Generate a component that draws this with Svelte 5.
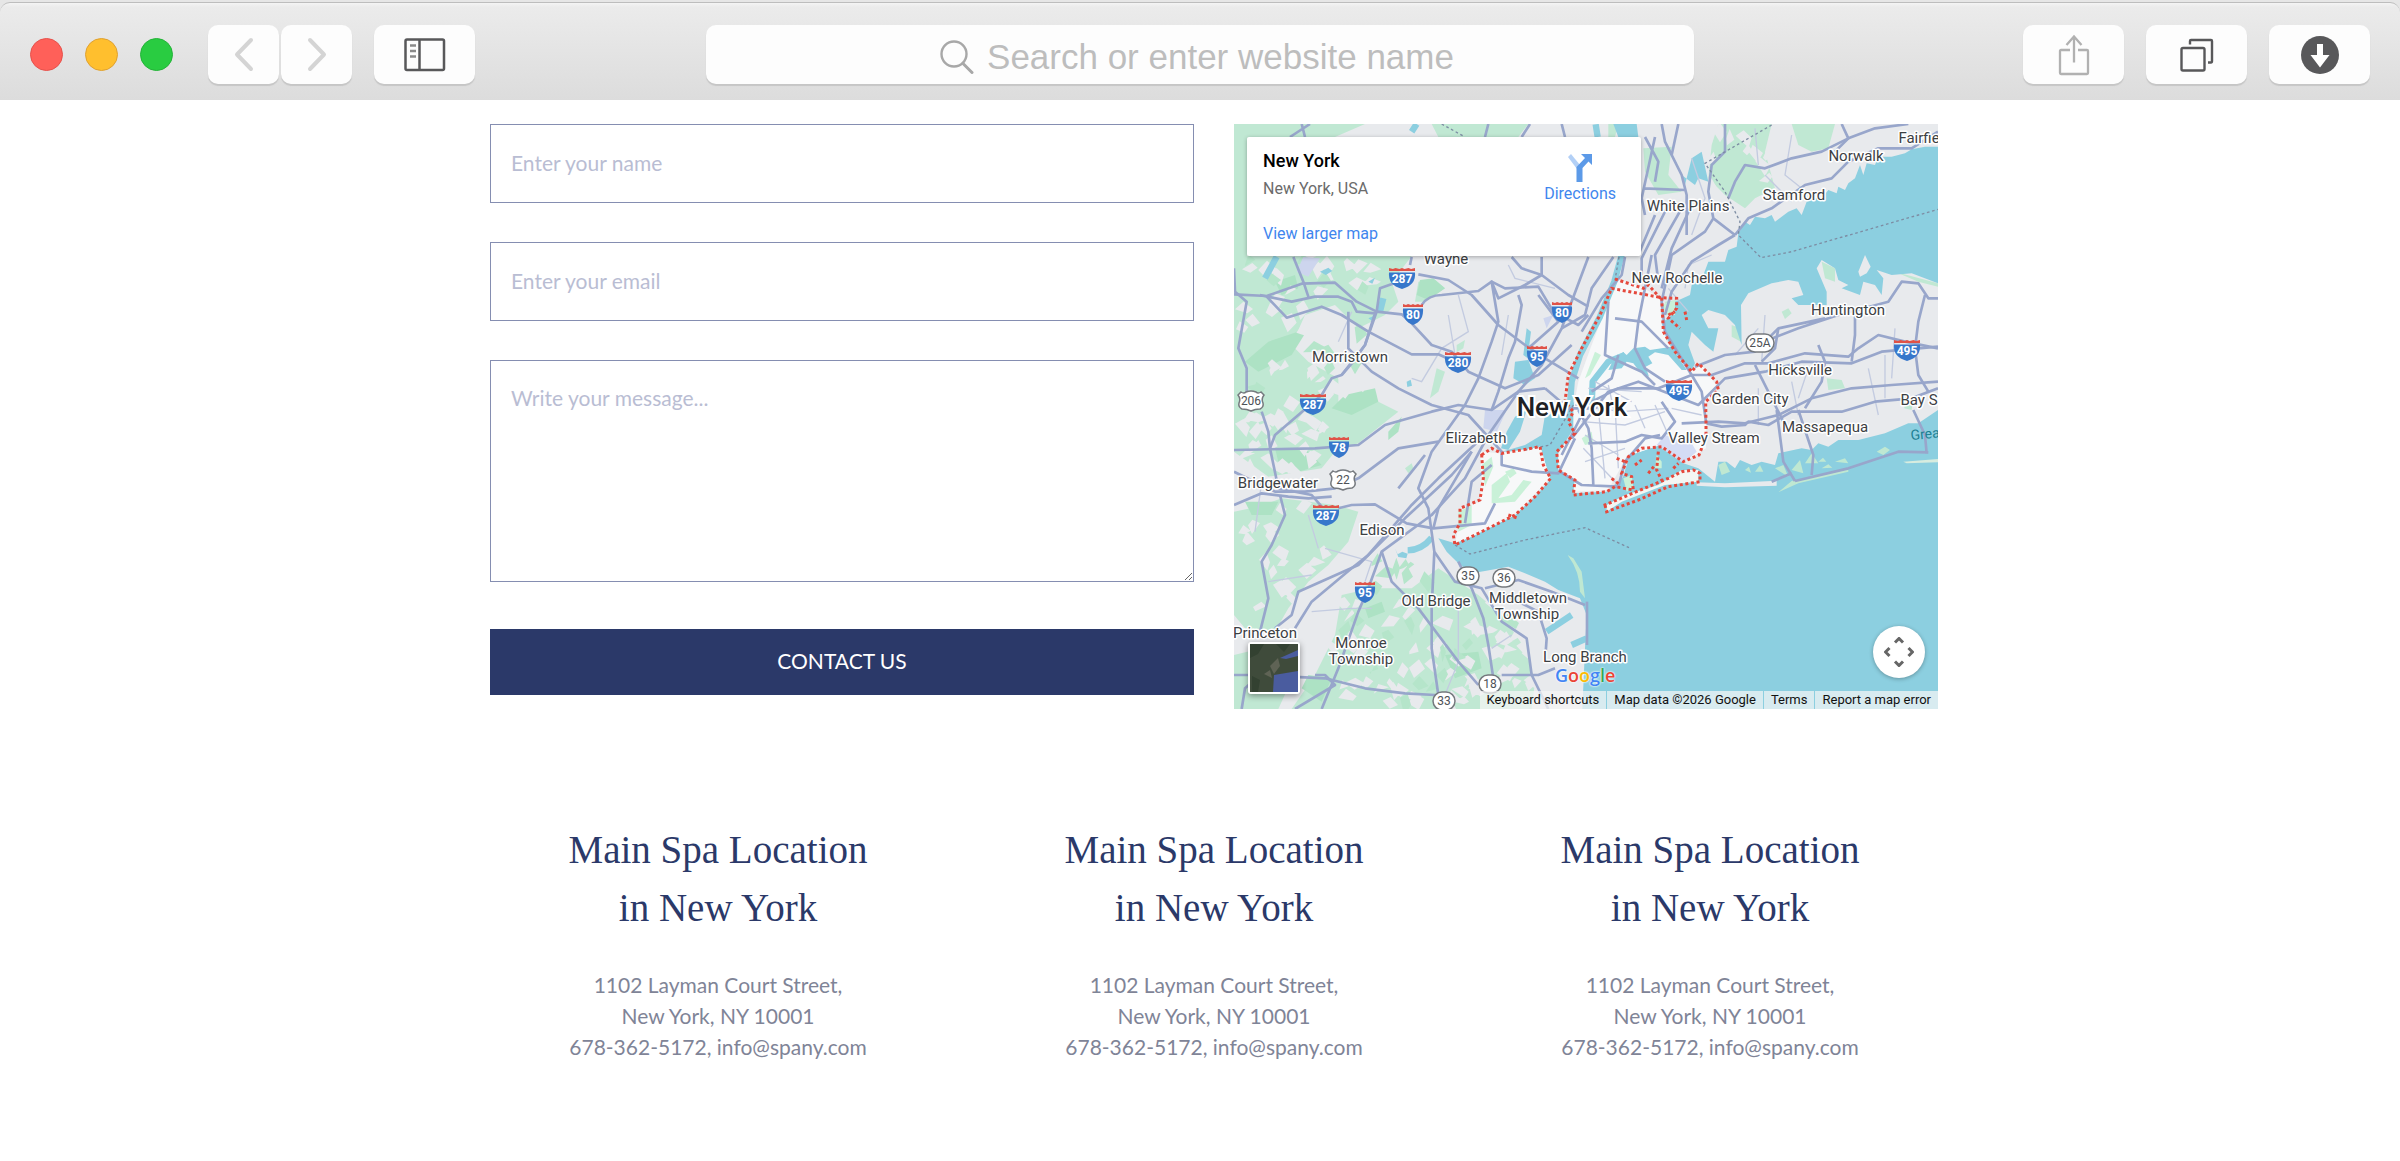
<script lang="ts">
  const locations = [1, 2, 3];

  const towns = [
    { x: 212, y: 140, text: 'Wayne' },
    { x: 116, y: 238, text: 'Morristown' },
    { x: 622, y: 37, text: 'Norwalk' },
    { x: 685, y: 19, text: 'Fairfie' },
    { x: 560, y: 76, text: 'Stamford' },
    { x: 454, y: 87, text: 'White Plains' },
    { x: 443, y: 159, text: 'New Rochelle' },
    { x: 614, y: 191, text: 'Huntington' },
    { x: 566, y: 251, text: 'Hicksville' },
    { x: 516, y: 280, text: 'Garden City' },
    { x: 685, y: 281, text: 'Bay S' },
    { x: 242, y: 319, text: 'Elizabeth' },
    { x: 44, y: 364, text: 'Bridgewater' },
    { x: 148, y: 411, text: 'Edison' },
    { x: 202, y: 482, text: 'Old Bridge' },
    { x: 294, y: 479, text: 'Middletown' },
    { x: 293, y: 495, text: 'Township' },
    { x: 31, y: 514, text: 'Princeton' },
    { x: 127, y: 524, text: 'Monroe' },
    { x: 127, y: 540, text: 'Township' },
    { x: 351, y: 538, text: 'Long Branch' },
    { x: 591, y: 308, text: 'Massapequa' },
    { x: 480, y: 319, text: 'Valley Stream' },
  ];

  const interstates = [
    { x: 168, y: 154, n: '287' },
    { x: 179, y: 190, n: '80' },
    { x: 328, y: 188, n: '80' },
    { x: 224, y: 238, n: '280' },
    { x: 303, y: 232, n: '95' },
    { x: 79, y: 280, n: '287' },
    { x: 445, y: 266, n: '495' },
    { x: 673, y: 226, n: '495' },
    { x: 105, y: 323, n: '78' },
    { x: 92, y: 391, n: '287' },
    { x: 131, y: 468, n: '95' },
  ];

  const usRoutes = [
    { x: 17, y: 277, n: '206' },
    { x: 109, y: 356, n: '22' },
  ];

  const stateRoutes = [
    { x: 526, y: 219, n: '25A' },
    { x: 234, y: 452, n: '35' },
    { x: 270, y: 454, n: '36' },
    { x: 256, y: 560, n: '18' },
    { x: 210, y: 577, n: '33' },
  ];

  // terrain is drawn on a 3x grid
  const greens = [
    '27,27 420,27 330,66 66,70 66,424 560,424 500,500 520,560 480,600 400,640 330,570 240,600 200,690 250,740 340,790 340,860 460,860 520,890 400,985 330,1010 290,1060 130,1085 27,1010',
    '580,500 630,495 660,520 600,560 570,560',
    '27,1190 100,1175 170,1150 330,1170 400,1190 370,1280 310,1350 250,1400 190,1480 150,1550 60,1540 27,1500',
    '350,1440 440,1420 560,1420 640,1360 760,1440 830,1500 900,1600 930,1700 920,1782 200,1782 270,1680 330,1560',
    '27,1620 110,1600 220,1650 160,1782 27,1782',
    '620,27 910,27 880,66 640,66',
    '1480,27 1640,27 1620,110 1650,220 1590,250 1560,280 1500,240 1450,190 1460,90',
    '1700,27 1830,27 1810,100 1760,110 1720,90',
    '1255,100 1340,95 1330,180 1370,230 1300,240 1260,170',
    '1150,27 1180,27 1170,66 1150,66',
    '615,850 635,760 660,770 640,830',
    '1670,590 1690,580 1700,595 1680,612',
    '1520,630 1545,640 1548,680 1520,665',
    '1790,440 1830,460 1830,500 1800,490',
    '1805,790 1850,795 1860,820 1810,825',
    '1320,560 1355,555 1350,600 1325,590',
    '2010,470 2139,505 2139,515 2080,500',
    '695,690 720,675 715,700 695,712',
    '540,1060 560,1045 565,1060 550,1075',
    '2040,845 2065,850 2060,885 2038,880',
  ];

  const darkGreens = [
    '130,680 250,640 200,720 100,770 60,740',
    '360,840 450,820 460,860 380,900 320,880',
    '585,495 625,490 660,520 610,555 575,540',
    '150,1000 240,1000 290,1050 220,1070 160,1040',
    '420,1480 470,1460 480,1490 430,1510',
    '660,1620 760,1610 770,1660 690,1690',
    '250,1680 320,1690 290,1760 230,1720',
    '150,500 210,480 220,520 170,540',
    '490,950 530,905 520,950 490,975',
    '60,1160 160,1160 140,1200 80,1200',
  ];

  const highways = [
    'M27 538L125 543L230 506L330 503L395 560L455 590L530 598L560 625L620 690L680 710L730 770L840 820L940 780L1040 690',
    'M125 545L185 608L290 575L350 600L430 650L560 718L640 718L700 745',
    'M590 570Q610 540 650 540L760 528L800 500L840 520L940 515L985 590L1060 630L1090 600',
    'M580 478L670 495L740 540L820 630L900 690L960 730L1060 790',
    'M27 1005L270 1000L400 990L480 930L620 890L700 870L800 885L880 830L960 820',
    'M560 426L555 450M520 500L465 520L455 590L420 690L350 780L320 790L290 840L150 960L135 1000L160 1120L260 1140L290 1175',
    'M340 1180L380 1170L450 1168L545 1225L625 1240L780 1225L810 1165',
    'M1090 426L1010 640L950 750L880 830L790 960L720 1090L620 1200L470 1310L430 1420L400 1490L340 1660L290 1782',
    'M950 426L950 480L900 510L820 550L800 500L820 620L800 680L760 790L720 870L620 1010L580 1120L610 1180L628 1310L690 1400L770 1420L830 1520L905 1570L920 1680L970 1782',
    'M860 426L890 460L950 480L1030 540L1090 575',
    'M205 426L235 500L250 545M105 540L200 560L270 545L340 545L380 560L395 590L450 595L420 690L385 740L350 780',
    'M370 590L370 700L440 770L520 820L620 870L730 900L830 1010L830 1050L920 1070L1000 1075L1050 970',
    'M27 460L30 530L65 560L40 700L65 760L65 840M110 890L130 950L135 1000',
    'M27 1070L150 1130L240 1130L330 1120L400 1090L520 1000L640 980',
    'M27 1170L110 1135L190 1145L250 1150L320 1145',
    'M165 1140L180 1200L140 1290L110 1340L130 1450L100 1570',
    'M600 1020L520 1120M740 1010L680 1080L540 1210L400 1350L220 1430L200 1500L150 1540',
    'M780 960L640 1090L560 1170L430 1320L380 1360L260 1460L210 1540',
    'M470 1310L500 1400L580 1480L640 1560L700 1640L760 1710',
    'M628 1310L620 1480L620 1600L640 1740L640 1782',
    'M27 1680L100 1680L300 1690L420 1720L540 1735L630 1740M830 1680L940 1680L990 1660',
    'M50 1782L60 1720L140 1650M210 1782L330 1710L300 1680L270 1680',
    'M700 1340L740 1420L775 1510L790 1590L805 1690',
    'M780 1420L880 1395L980 1430L1080 1470M840 1440L940 1490L965 1570L960 1640',
    'M625 1240L640 1180L740 1010M720 1225L740 1100L800 1050',
    'M1200 426L1190 480L1130 550L1070 650M1165 426L1100 520L1080 600L1010 640',
    'M1010 27L1020 66M790 27L780 66M915 27L890 66M230 27L240 66M255 27L195 66',
    'M1310 27L1320 80L1370 180L1385 240L1385 360M1500 27L1500 110L1460 150L1450 230L1465 310L1530 360',
    'M1255 220L1380 225M1290 66L1250 250L1260 300M1260 66L1300 140L1290 200M1360 27L1340 120',
    'M1280 420L1260 520L1240 620L1230 700L1260 760L1320 800',
    'M1330 270L1250 430L1250 490M1370 280L1290 420L1300 500M1400 270L1340 400L1310 520M1290 300L1240 420',
    'M1465 310L1440 350L1340 420L1310 560L1320 650L1400 780L1430 830L1443 920',
    'M1530 360L1480 390L1400 440L1340 530L1320 600',
    'M1530 360L1570 310L1640 280L1740 210L1820 190L1870 140L1960 100L2060 100L2139 50',
    'M1510 250L1530 200L1560 150L1620 160L1700 130L1790 110L1870 70L1950 40L2050 27',
    'M1830 110L1870 70L1850 27',
    'M1170 610L1250 620L1330 700M1150 560L1140 720L1250 770L1290 810M1180 720L1160 790L1100 830',
    'M1100 860L1180 820L1300 820L1400 780L1460 780L1560 745L1630 745L1740 715L1870 725L1900 700L1960 660L2040 680L2139 700',
    'M1040 970L1150 830L1240 800L1420 870L1500 790L1620 770L1730 740L1880 745L1970 710L2139 695',
    'M1410 755L1500 720L1590 710L1660 640L1800 610M1590 690L1720 640L1840 600L1990 560L2030 500L2080 505L2110 550L2139 550',
    'M1590 750L1610 790L1650 870L1690 950',
    'M1370 925L1480 920L1560 925L1660 900L1760 850L1880 820L2000 810L2139 800',
    'M1445 925L1490 935L1560 930L1570 920L1630 930L1700 890L1850 890L1950 860L2060 850L2139 820',
    'M1655 885L1675 1040L1710 1098M1720 885L1765 1020L1760 1080M2065 885L2100 960L2105 1015',
    'M1640 1100L1700 1075M1710 1098L1870 1060L2020 1010L2110 1012',
    'M1660 640L1650 700L1610 740M1780 690L1800 740L1790 800L1740 880M1890 600L1890 660L1880 740M2100 540L2080 620L2070 700L2080 780L2110 830',
    'M1060 885L1090 940L1100 1000L1105 1110M1090 985L1200 980L1250 960L1310 970L1350 920L1310 860M1005 1070L1070 1110L1180 1115L1200 1040L1260 970L1305 960',
    'M1010 1020L1040 960L1070 900M960 820L1030 880L1100 880',
    'M880 540L890 570L870 680L850 730L820 830L800 885M940 540L1000 620L910 700',
    'M1086 1460L1086 1590',
  ];

  const streets = [
    'M670 600L690 720M700 540L730 650L650 700L590 800L560 790',
    'M850 450L870 490L990 520M380 590L340 680M850 600L830 720',
    'M1050 870L1190 890L1330 880M1070 920L1200 930L1320 890M1080 1040L1200 1000M1120 880L1140 1090M1170 870L1180 1060M1230 870L1260 940',
    'M1090 820L1250 830M1110 800L1220 860M1150 810L1170 900M1080 960L1180 1020M1075 1000L1180 1110M1290 870L1330 960',
    'M1340 880L1430 900M1600 820L1600 930M1700 800L1720 900M1620 600L1610 740M1980 720L1980 850M1930 760L1960 900',
    'M300 1300L440 1340L420 1400M130 1400L260 1380M700 1480L700 1640L660 1740',
    'M1700 60L1680 180L1730 220M1620 180L1700 260M1590 40L1600 150M1400 130L1440 250L1400 360',
    'M110 1100L90 1250M250 1200L280 1300M860 1560L800 1600M440 1480L380 1480L260 1490',
    'M1330 520L1390 590M1460 420L1390 450L1380 520M1600 640L1530 720M1750 760L1720 850M2010 640L2000 790',
  ];

  const rivers = [
    'M1112 28L1118 66M1190 420L1168 500L1125 605L1065 720L1040 800L1035 870',
    'M620 1268Q590 1305 548 1306',
    'M1100 870L1103 800L1150 740L1200 720',
    'M120 490L155 425M465 590L475 550',
    'M560 50L575 27M965 1550L1040 1500M1040 1590L1085 1570',
  ];

  // small parcels that break up the woodland and farmland west of the city
  function scatter(count: number, seed: number, box: number[]) {
    let s = seed;
    const rnd = () => {
      s = (s * 16807) % 2147483647;
      return s / 2147483647;
    };
    let d = '';
    for (let i = 0; i < count; i++) {
      const x = Math.round(box[0] + rnd() * box[2]);
      const y = Math.round(box[1] + rnd() * box[3]);
      const r = () => Math.round(8 + rnd() * 26);
      d += `M${x} ${y}l${r()} ${-r()}l${r()} ${r()}l${-r()} ${r()}z`;
    }
    return d;
  }

  const clearings =
    scatter(46, 71, [30, 430, 400, 450]) +
    scatter(30, 37, [30, 890, 300, 170]) +
    scatter(22, 93, [40, 1180, 250, 320]) +
    scatter(70, 11, [300, 1440, 600, 330]) +
    scatter(10, 53, [1450, 40, 180, 170]);
  const woods = scatter(8, 29, [420, 1340, 180, 90]) + scatter(12, 61, [60, 440, 350, 420]) + scatter(14, 17, [340, 1480, 480, 280]);
</script>

<header class="toolbar">
  <div class="group">
    <div class="lights">
      <button class="light red" aria-label="Close"></button>
      <button class="light amber" aria-label="Minimize"></button>
      <button class="light green" aria-label="Zoom"></button>
    </div>
    <div class="nav">
      <button class="tool narrow" aria-label="Back">
        <svg width="22" height="36" viewBox="0 0 22 36"><path d="M18 3L4 17.500L18 32" class="arrow" /></svg>
      </button>
      <button class="tool narrow" aria-label="Forward">
        <svg width="22" height="36" viewBox="0 0 22 36"><path d="M4 3L18 17.500L4 32" class="arrow" /></svg>
      </button>
    </div>
    <button class="tool" aria-label="Show sidebar">
      <svg width="42" height="34" viewBox="0 0 42 34" fill="none" stroke="#58585a" stroke-width="2.500">
        <rect x="1.500" y="1.500" width="38.500" height="30.500" rx="1.500" />
        <path d="M15.500 1.500V32" />
        <path d="M6 7.500h6M6 13h6M6 18.500h6" stroke="#8a8a8a" stroke-width="2.300" />
      </svg>
    </button>
  </div>

  <label class="search">
    <svg width="34" height="34" viewBox="0 0 34 34" fill="none" stroke="#a8a8a8" stroke-width="2.400" stroke-linecap="round">
      <circle cx="14" cy="14" r="12.500" />
      <path d="M23 23.500L32 32.500" stroke-width="3" />
    </svg>
    <input type="text" placeholder="Search or enter website name" aria-label="Search or enter website name" />
  </label>

  <div class="group right">
    <button class="tool" aria-label="Share">
      <svg width="32" height="42" viewBox="0 0 32 42" fill="none" stroke="#b1b1b1" stroke-width="2.300">
        <path d="M12 16H3Q2 16 2 17V39Q2 40 3 40H29Q30 40 30 39V17Q30 16 29 16H20" />
        <path d="M16 28.500V3M8.500 11L16 2.500L23.500 11" />
      </svg>
    </button>
    <button class="tool" aria-label="Tabs">
      <svg width="34" height="34" viewBox="0 0 34 34" fill="none" stroke="#58585a" stroke-width="2.400">
        <rect x="1.500" y="10" width="23" height="22.500" rx="1.500" />
        <path d="M10 6.500V3Q10 2 11 2H31Q32 2 32 3V23Q32 24.500 31 24.500H28" />
      </svg>
    </button>
    <button class="tool" aria-label="Downloads">
      <svg width="38" height="38" viewBox="0 0 38 38">
        <circle cx="19" cy="19" r="19" fill="#58585a" />
        <path d="M16 8h6v11h6.500L19 31.500L9.500 19H16z" fill="#fff" />
      </svg>
    </button>
  </div>
</header>

<main>
  <section class="contact">
    <form>
      <input class="field" type="text" placeholder="Enter your name" aria-label="Name" />
      <input class="field" type="email" placeholder="Enter your email" aria-label="Email" />
      <textarea class="field" placeholder="Write your message..." aria-label="Message"></textarea>
      <button class="submit" type="submit">CONTACT US</button>
    </form>

    <div class="map">
      <svg class="tiles" viewBox="0 0 704 585" preserveAspectRatio="xMidYMid slice" role="img" aria-label="Map of New York">
        <rect width="704" height="585" fill="#e8eaed" />
        <g transform="translate(-9 -9) scale(0.33333)">
          {#each greens as points}
            <polygon {points} fill="#c0e8d3" />
          {/each}
          {#each darkGreens as points}
            <polygon {points} fill="#ade2c4" />
          {/each}
          <path d={clearings} fill="#e8eaed" />
          <path d={woods} fill="#b5e5ca" />
          <path d="M780 885L845 885L815 950L775 940zM955 610L985 600L965 640zM215 470L235 426L285 430L250 485z" fill="#cdd5ee" />

          <g fill="#8ccfe0">
            <polygon
              points="2139,95 2100,95 2060,103 2040,115 2000,125 1960,125 1950,150 1925,145 1915,180 1905,150 1890,190 1870,205 1860,225 1840,215 1835,235 1810,225 1790,250 1765,250 1745,260 1730,300 1715,280 1690,290 1650,320 1640,300 1620,310 1590,305 1575,330 1560,320 1540,355 1535,395 1510,405 1500,440 1450,440 1435,480 1400,510 1395,540 1350,560 1340,600 1310,625 1325,670 1350,720 1398,770 1410,745 1390,690 1400,650 1440,690 1465,710 1480,640 1450,640 1430,600 1450,585 1500,600 1530,630 1550,690 1548,570 1570,535 1640,505 1690,495 1720,500 1735,540 1700,550 1720,570 1805,570 1805,530 1775,460 1790,435 1830,460 1840,495 1870,510 1850,520 1905,540 1915,500 1950,510 1970,540 1975,490 1955,465 2000,480 2060,475 2139,505"
            />
            <polygon
              points="1045,860 1060,900 1040,950 1000,1015 1000,1070 1050,1095 1045,1135 1145,1130 1195,1085 1215,1020 1305,990 1375,1045 1420,1060 1470,1100 1480,1040 1505,1040 1530,1060 1545,1035 1580,1050 1610,1040 1650,1050 1660,1015 1730,1000 1760,1005 1780,985 1810,995 1840,975 1900,975 1980,955 2050,925 2080,925 2139,885 2139,1782 1072,1782 1080,1600 1085,1500 1065,1450 1000,1425 960,1400 900,1375 850,1355 780,1368 740,1375 700,1345 665,1310 640,1270 690,1285 740,1265 870,1200 930,1145 975,1095 950,1005 830,1010 900,990 950,960 960,900"
            />
            <polygon points="1380,210 1400,130 1430,110 1450,200 1420,190 1410,210 1370,180" />
            <polygon points="1165,27 1235,27 1240,66 1180,66" />
            <polygon points="870,740 910,735 930,790 900,810 865,790" />
            <polygon points="828,1000 845,950 870,905 905,885 885,950 850,1005" />
            <polygon points="895,720 905,640 918,650 908,730" />
            <path d="M285 470l25-12l12 10l-20 12zM430 500l20-12l-8 18zM430 610l18-8l-6 16zM545 800l12-6l4 18l-14 4zM510 1300l8 18l14-8l16 6l-4 14l-24-4z" />
          </g>
          <polygon points="1900,470 1920,420 1937,455 1925,475 1905,485" fill="#e8eaed" />

          <polygon
            points="1175,492 1250,515 1305,550 1308,620 1325,680 1395,770 1430,750 1480,820 1445,860 1443,1000 1375,1045 1305,990 1205,1025 1150,1125 1045,1130 1050,1095 1000,1070 1000,1015 1045,950 1045,880 1060,800 1100,690 1150,560"
            fill="#f7f8f9"
          />
          <polygon points="765,1010 830,1015 945,995 975,1090 870,1200 740,1265 690,1285 700,1240 705,1180 765,1160 770,1090" fill="#f7f8f9" />
          <path d="M800 1110l45-35l10 25l-35 50l40-10l35-45l25 5l-50 60l-70 5zM840 1070l25-10l10 15l-20 15zM770 1050l30-25l5 30l-25 60z" fill="#c9f1d8" />
          <polygon points="700,1190 740,1170 740,1230 700,1250" fill="#c9f1d8" />
          <polygon points="1080,790 1110,710 1128,720 1095,780" fill="#c9f1d8" />
          <polygon points="1310,570 1350,555 1350,600 1325,600" fill="#c9f1d8" />
          <polygon points="1070,970 1100,950 1105,985 1080,990" fill="#c9f1d8" />
          <polygon points="1145,1170 1200,1140 1300,1110 1370,1065 1420,1065 1420,1100 1320,1110 1190,1160 1145,1190" fill="#f4f6f3" />
          <polygon points="1195,1085 1215,1020 1305,995 1370,1045 1340,1075 1250,1105 1210,1125" fill="#8ccfe0" />
          <polygon points="1195,1090 1220,1080 1225,1120 1205,1130" fill="#c9f1d8" />
          <polygon points="1295,1020 1310,1040 1310,1060 1290,1060" fill="#c9f1d8" />
          <polygon points="1295,990 1320,960 1400,985 1415,1010 1375,1045" fill="#d4dcf5" />
          <polygon
            points="1150,765 1170,725 1195,712 1205,720 1225,700 1260,695 1275,705 1340,695 1385,765 1370,765 1330,720 1290,712 1270,725 1282,745 1262,755 1272,785 1240,765 1225,745 1205,740 1190,760"
            fill="#8ccfe0"
          />
          <polygon points="1415,1102 1500,1105 1655,1097 1655,1112 1500,1117 1415,1112" fill="#e8eaed" />
          <polygon points="1660,1132 1700,1098 1870,1060 1870,1070 1720,1105" fill="#bfe8d2" />
          <polygon points="2035,1040 2139,1032 2139,1042 2045,1045" fill="#d7ecdf" />
          <path
            d="M1480 1050l20-10l15 30l-25 10zM1740 1045l20-30l20 30zM1700 1065l25-30l10 40zM1650 1060l25-10l15 35zM1830 1040l30-10l10 15zM1955 1010l25-15l15 10l-20 15zM1590 1070l15-20l10 20zM1560 1065l12-10l6 18zM1790 1060l20-12l12 10zM1780 1040l14-12l10 12z"
            fill="#bfe8d2"
          />
          <path d="M1028 1320L1045 1330L1070 1370L1080 1450L1065 1430Q1065 1370 1028 1320z" fill="#bfe8d2" />

          <g fill="none" stroke="#8ccfe0" stroke-width="19" stroke-linejoin="round">
            {#each rivers as d}
              <path {d} />
            {/each}
          </g>
          <g fill="none" stroke="#c3cbe0" stroke-width="4">
            {#each streets as d}
              <path {d} />
            {/each}
          </g>
          <g fill="none" stroke="#98a6cb" stroke-width="8" stroke-linejoin="round">
            {#each highways as d}
              <path {d} />
            {/each}
          </g>

          <g fill="none" stroke="#7d8da3" stroke-width="4" stroke-dasharray="8 8">
            <path d="M650 27L720 66M1640 30L1440 145L1500 230L1545 320L1540 360L1608 428L1700 410L2139 283" />
            <path d="M1182 426L1170 495M1045 870L975 990L900 1005M690 1290L735 1317L900 1275L1080 1238L1212 1298" />
          </g>
          <g fill="none" stroke="#e5483c" stroke-width="9" stroke-dasharray="9 8">
            <path d="M1170 492L1255 520L1270 510L1305 548L1355 550L1355 580L1330 610L1365 640M1310 548L1315 650L1350 710L1400 770L1420 745L1475 800L1480 825L1442 860L1443 920L1443 960L1430 1000L1422 1020L1375 1040L1310 995L1250 1000L1210 1025L1190 1075L1220 1085L1225 1125L1170 1115L1145 1130L1045 1140L1050 1095L1000 1065L995 1010L1050 955L1030 920L1045 890L1020 860L1030 780L1070 700L1125 600L1160 520Z" />
            <path d="M770 1020L800 1000L830 1015L890 1005L945 995L955 1050L977 1090L930 1145L870 1200L800 1235L740 1265L690 1290L685 1260L705 1225L705 1180L765 1155L775 1090Z" />
            <path d="M1140 1170L1145 1190L1240 1155L1330 1115L1425 1100L1425 1075L1405 1065L1370 1070L1330 1090L1270 1115Z" />
            <path d="M1175 1030L1200 1040M1160 1090L1185 1110M1300 1010L1295 1065L1310 1095M1230 1050L1250 1035M1270 1075L1290 1050M1345 1060L1360 1045M1380 590L1385 615M1330 600L1350 590M850 1200L880 1210" />
          </g>
        </g>

        {#each stateRoutes as { x, y, n }}
          <rect x={x - (n.length > 2 ? 14 : 11)} y={y - 9} width={n.length > 2 ? 28 : 22} height="18" rx="9" class="sign" />
          <text {x} y={y + 4} class="route">{n}</text>
        {/each}
        {#each usRoutes as { x, y, n }}
          <path
            transform="translate({x} {y})"
            d="M-10 -9Q-7 -7 -5 -9Q0 -11 5 -9Q7 -7 10 -9L13 -6Q10 -2 12 2Q13 6 9 8Q4 8 0 10Q-4 8 -9 8Q-13 6 -12 2Q-10 -2 -13 -6z"
            class="sign"
          />
          <text {x} y={y + 4} class="route">{n}</text>
        {/each}
        {#each interstates as { x, y, n }}
          <g transform="translate({x} {y})">
            <g transform={n.length > 2 ? 'scale(1.3 1)' : undefined}>
              <path d="M-10 -5.500H10Q11 7 0 11Q-11 7 -10 -5.500z" fill="#3777cb" />
              <path d="M-10 -10L-7 -9L-5 -10L-2 -9L0 -10L2 -9L5 -10L7 -9L10 -10V-7H-10z" fill="#e05247" />
            </g>
            <text y="5" class="interstate">{n}</text>
          </g>
        {/each}

        {#each towns as { x, y, text }}
          <text {x} {y} class="town">{text}</text>
        {/each}
        <text x="677" y="316" class="sea" transform="rotate(-5 677 316)">Grea</text>
        <text x="338" y="292" class="city">New York</text>
      </svg>

      <div class="place">
        <div class="place-text">
          <strong>New York</strong>
          <span>New York, USA</span>
          <a href="#larger">View larger map</a>
        </div>
        <a class="directions" href="#directions">
          <svg width="24" height="28" viewBox="0 0 24 28">
            <path d="M0 3L3 0L12 11L9 15z" fill="#b3d0f6" />
            <path d="M13 0H24V11L20.500 7.500L14.500 14V28H8.500V13L17 4z" fill="#5c9ae8" />
          </svg>
          Directions
        </a>
      </div>

      <button class="satellite" aria-label="Show satellite imagery">
        <svg width="48" height="48" viewBox="0 0 48 48">
          <rect width="48" height="48" fill="#3f4b3b" />
          <path d="M0 0H14L8 10L0 14zM26 0H40L34 8zM2 32L10 36L8 48H2z" fill="#334131" />
          <path d="M20 22L28 14L30 22L24 30zM14 30L20 26L22 34z" fill="#5f6355" />
          <path d="M24 31L48 27V48H23zM30 14L48 6V12L36 15z" fill="#4a5c9f" />
        </svg>
      </button>

      <div class="google" aria-label="Google">
        <span class="b">G</span><span class="r">o</span><span class="y">o</span><span class="b">g</span><span class="g">l</span><span class="r">e</span>
      </div>

      <button class="pan" aria-label="Map camera controls">
        <svg width="30" height="30" viewBox="0 0 30 30" fill="none" stroke="#666" stroke-width="3">
          <path d="M11 5.500L15 1.500L19 5.500M11 24.500L15 28.500L19 24.500M5.500 11L1.500 15L5.500 19M24.500 11L28.500 15L24.500 19" />
        </svg>
      </button>

      <div class="credits">
        <button>Keyboard shortcuts</button>
        <span>Map data ©2026 Google</span>
        <a href="#terms">Terms</a>
        <a href="#report">Report a map error</a>
      </div>
    </div>
  </section>

  <section class="locations">
    {#each locations as id (id)}
      <article>
        <h2>Main Spa Location<br />in New York</h2>
        <p>1102 Layman Court Street,<br />New York, NY 10001<br />678-362-5172, info@spany.com</p>
      </article>
    {/each}
  </section>
</main>

<style>
  :global(body) {
    background: #fff;
    font-family: Lato, sans-serif;
  }
  :global(#app) {
    overflow: hidden;
    background: linear-gradient(#e6e6e6 20px, #fff 20px);
  }
  button,
  input,
  textarea {
    font-family: inherit;
    margin: 0;
  }
  button {
    padding: 0;
    border: 0;
    cursor: pointer;
  }
  a {
    text-decoration: none;
  }
  svg {
    display: block;
  }

  .toolbar {
    box-sizing: border-box;
    display: grid;
    grid-template-columns: 1fr minmax(0, 988px) 1fr;
    align-items: center;
    height: 98px;
    margin-top: 2px;
    padding: 6px 30px 0;
    border-top: 1px solid #bdbdbd;
    border-radius: 10px 10px 0 0;
    background: linear-gradient(#f4f4f4, #ebebeb 4px, #dcdcdc);
  }
  .group {
    display: flex;
    align-items: center;
    gap: 22px;
  }
  .group.right {
    justify-content: flex-end;
  }
  .lights {
    display: flex;
    gap: 22px;
    margin-right: 13px;
  }
  .light {
    width: 33px;
    height: 33px;
    border-radius: 50%;
    border: 1px solid;
  }
  .red {
    background: #ff6059;
    border-color: #e6514b;
  }
  .amber {
    background: #ffbf2e;
    border-color: #dfa131;
  }
  .green {
    background: #29cc41;
    border-color: #23b337;
  }
  .nav {
    display: flex;
    gap: 2px;
  }
  .tool {
    display: flex;
    align-items: center;
    justify-content: center;
    width: 101px;
    height: 59px;
    border-radius: 10px;
    background: #fdfdfd;
    box-shadow: 0 2px 1px #c6c6c6;
  }
  .tool.narrow {
    width: 71px;
  }
  .arrow {
    fill: none;
    stroke: #d4d4d4;
    stroke-width: 4;
    stroke-linecap: round;
    stroke-linejoin: round;
  }
  .search {
    box-sizing: border-box;
    display: flex;
    align-items: center;
    justify-content: center;
    gap: 13px;
    height: 59px;
    padding: 4px 6px 0 0;
    border-radius: 10px;
    background: #fdfdfd;
    box-shadow: 0 2px 1px #c6c6c6;
  }
  .search input {
    field-sizing: content;
    padding: 0;
    border: 0;
    outline: 0;
    background: none;
    font: 35px 'Liberation Sans', Arial, sans-serif;
  }
  .search input::placeholder {
    color: #bdbdbd;
  }

  main {
    max-width: 1448px;
    margin: 0 auto;
    padding: 24px 0 24px 28px;
  }
  .contact {
    display: grid;
    grid-template-columns: 1fr 1fr;
    align-items: start;
    gap: 40px;
  }
  form {
    display: flex;
    flex-direction: column;
    gap: 39px;
  }
  .field {
    box-sizing: border-box;
    width: 100%;
    height: 79px;
    padding: 0 20px 2px;
    border: 1px solid #858eb1;
    border-radius: 0;
    background: #fff;
    color: #2b3969;
    font-size: 21px;
    line-height: 26px;
  }
  .field::placeholder {
    color: #b9bdd3;
    opacity: 1;
  }
  textarea.field {
    height: 222px;
    padding: 24px 20px;
    resize: vertical;
  }
  .submit {
    height: 66px;
    margin-top: 8px;
    padding-bottom: 4px;
    background: #2b3969;
    color: #fff;
    font-size: 21px;
  }

  .map {
    position: relative;
    aspect-ratio: 704 / 585;
    overflow: hidden;
    font-family: Roboto, sans-serif;
  }
  .tiles {
    width: 100%;
    height: 100%;
  }
  .tiles text {
    text-anchor: middle;
    font-family: Roboto, sans-serif;
    fill: #3c4043;
  }
  .tiles .town {
    font-size: 15px;
    paint-order: stroke;
    stroke: #fff;
    stroke-width: 3px;
    stroke-linejoin: round;
  }
  .tiles .city {
    font-size: 26px;
    font-weight: 500;
    fill: #202124;
    paint-order: stroke;
    stroke: #fff;
    stroke-width: 4px;
  }
  .tiles .sea {
    text-anchor: start;
    font-size: 14px;
    fill: #1d8093;
  }
  .tiles .route {
    font-size: 12px;
    fill: #4d5156;
  }
  .tiles .interstate {
    font-size: 12px;
    font-weight: 700;
    fill: #fff;
  }
  .sign {
    fill: #fff;
    stroke: #75797e;
    stroke-width: 1.5px;
  }

  .place {
    position: absolute;
    top: 13px;
    left: 13px;
    box-sizing: border-box;
    display: flex;
    justify-content: space-between;
    width: 394px;
    height: 119px;
    padding: 12px 25px 0 16px;
    border-radius: 2px;
    background: #fff;
    box-shadow: 0 1px 4px rgba(0, 0, 0, 0.3);
    font-size: 16px;
    line-height: 24px;
  }
  .place-text {
    display: flex;
    flex-direction: column;
  }
  .place strong {
    margin-bottom: 4px;
    font-size: 18px;
    font-weight: 500;
  }
  .place span {
    margin-bottom: 21px;
    color: #6b6b6b;
  }
  .place a {
    color: #3f86ee;
  }
  .directions {
    display: flex;
    flex-direction: column;
    align-items: center;
    padding-top: 5px;
  }
  .satellite {
    position: absolute;
    bottom: 15px;
    left: 14px;
    border: 2px solid #fff;
    border-radius: 3px;
    box-shadow: 0 2px 6px rgba(0, 0, 0, 0.4);
  }
  .google {
    position: absolute;
    bottom: 22px;
    left: 321px;
    font: 600 18px/24px 'Open Sans', sans-serif;
    text-shadow: 0 0 2px #fff, 0 0 2px #fff;
  }
  .b {
    color: #4285f4;
  }
  .r {
    color: #ea4335;
  }
  .y {
    color: #fbbc04;
  }
  .g {
    color: #34a853;
  }
  .pan {
    position: absolute;
    right: 13px;
    bottom: 31px;
    display: flex;
    align-items: center;
    justify-content: center;
    width: 52px;
    height: 52px;
    border-radius: 50%;
    background: #fff;
    box-shadow: 0 1px 4px rgba(0, 0, 0, 0.3);
  }
  .credits {
    position: absolute;
    right: 0;
    bottom: 0;
    display: flex;
    gap: 1px;
  }
  .credits > * {
    padding: 0 7px;
    background: rgba(245, 245, 245, 0.72);
    color: #111;
    font-size: 13px;
    line-height: 18px;
  }

  .locations {
    display: grid;
    grid-template-columns: repeat(3, 1fr);
    gap: 40px;
    margin-top: 112px;
    text-align: center;
  }
  h2 {
    margin: 0 0 32px;
    color: #2b3969;
    font: 400 39px/58px 'Gentium Book Basic', 'Liberation Serif', serif;
  }
  p {
    margin: 0;
    color: #7f8497;
    font-size: 21px;
    line-height: 31px;
  }
</style>
